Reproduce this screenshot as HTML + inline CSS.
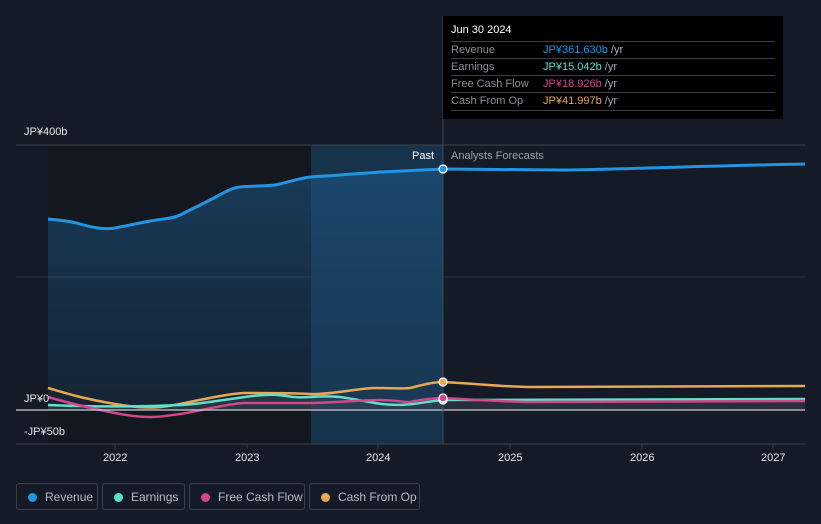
<!DOCTYPE html><html><head><style>
body{margin:0;background:#151b26;font-family:"Liberation Sans",sans-serif;}
.wrap{position:relative;width:821px;height:524px;overflow:hidden;background:#151b26}
.t{position:absolute;color:#e6e8eb;font-size:11px}
.tip{position:absolute;left:443px;top:16px;width:340px;height:103px;background:#000;}
.tip .h{position:absolute;left:8px;top:8px;color:#fff;font-size:11px}
.row{position:absolute;left:8px;width:324px;border-top:1px solid #3a3d42;height:17px;font-size:11px;color:#8a8f98;line-height:17px}
.row span{position:absolute;left:92px}
.row i{font-style:normal;color:#aab}
.leg{position:absolute;top:483px;height:27px;border:1px solid #3a404c;border-radius:3px;color:#b8bcc4;font-size:12px;line-height:27px;box-sizing:border-box}
.leg b{position:absolute;left:11px;top:9px;width:9px;height:9px;border-radius:50%}
.leg span{position:absolute;left:28px}
</style></head><body><div class="wrap">
<svg width="821" height="524" style="position:absolute;left:0;top:0">
<defs><linearGradient id="g" x1="0" y1="0" x2="0" y2="1"><stop offset="0" stop-color="#1d5a8a" stop-opacity=".55"/><stop offset="1" stop-color="#1d4a70" stop-opacity=".25"/></linearGradient></defs>
<rect x="48" y="145" width="263" height="299" fill="#121720"/>
<rect x="311" y="145" width="132" height="299" fill="#17324b"/>
<line x1="16" y1="145" x2="805" y2="145" stroke="#3a404c"/>
<line x1="16" y1="277" x2="805" y2="277" stroke="#2a303c"/>
<path d="M48,219 C60,220 70,221 80,224 S105,230 115,228 S140,223 150,221 S172,219 180,215 S200,205 210,200 S230,188 240,187 S268,186 275,185 S300,178 310,177 S330,176 340,175 S370,173 380,172 L443,169 L443,410 L48,410Z" fill="url(#g)"/>
<path d="M48,219 C60,220 70,221 80,224 S105,230 115,228 S140,223 150,221 S172,219 180,215 S200,205 210,200 S230,188 240,187 S268,186 275,185 S300,178 310,177 S330,176 340,175 S370,173 380,172 L443,169 C480,169 520,170 560,170 S700,166 805,164" fill="none" stroke="#2394e0" stroke-width="3"/>
<path d="M48,405 C80,406 100,407 150,406 S200,403 245,397 S280,399 310,397 S345,398 375,403 S420,402 443,400 L805,399 L805,410 L48,410Z" fill="#3a4450" opacity=".5"/>
<path d="M48,388 C65,393 80,398 115,404 S165,407 180,404 S230,393 245,393 S290,393 310,394 S360,388 375,388 S405,389 410,388 S430,382 443,382 C480,384 510,387 530,387 L805,386" fill="none" stroke="#e8a851" stroke-width="2.5"/>
<path d="M48,405 C80,406 100,407 150,406 S200,403 245,397 S280,399 310,397 S345,398 375,403 S420,402 443,400 L805,399" fill="none" stroke="#5fe0c8" stroke-width="2.5"/>
<path d="M48,397 C65,402 80,406 115,413 S165,416 180,414 S230,403 245,403 S290,403 310,403 S360,400 380,400 S405,403 410,402 S430,398 443,398 C480,400 510,402 530,402 L805,401" fill="none" stroke="#d0478a" stroke-width="2.5"/>
<line x1="16" y1="410" x2="805" y2="410" stroke="#c8ccd2" stroke-width="1.2"/>
<line x1="16" y1="444" x2="805" y2="444" stroke="#3a404c"/>
<g stroke="#3a404c"><line x1="115" y1="444" x2="115" y2="449"/><line x1="247" y1="444" x2="247" y2="449"/><line x1="378" y1="444" x2="378" y2="449"/><line x1="510" y1="444" x2="510" y2="449"/><line x1="642" y1="444" x2="642" y2="449"/><line x1="773" y1="444" x2="773" y2="449"/></g>
<line x1="443" y1="16" x2="443" y2="444" stroke="#3a4a5c"/>
<circle cx="443" cy="169" r="4" fill="#2394e0" stroke="#fff" stroke-width="1.2"/>
<circle cx="443" cy="382" r="4" fill="#e8a851" stroke="#fff" stroke-width="1.2"/>
<circle cx="443" cy="400" r="4" fill="#5fe0c8" stroke="#fff" stroke-width="1.2"/>
<circle cx="443" cy="398" r="4" fill="#d0478a" stroke="#fff" stroke-width="1.2"/>
</svg>
<div class="t" style="left:24px;top:126px">JP¥400b</div>
<div class="t" style="left:24px;top:393px">JP¥0</div>
<div class="t" style="left:24px;top:426px">-JP¥50b</div>
<div class="t" style="left:412px;top:150px;color:#fff">Past</div>
<div class="t" style="left:451px;top:150px;color:#9aa0a8">Analysts Forecasts</div>
<div class="t" style="left:103px;top:452px">2022</div>
<div class="t" style="left:235px;top:452px">2023</div>
<div class="t" style="left:366px;top:452px">2024</div>
<div class="t" style="left:498px;top:452px">2025</div>
<div class="t" style="left:630px;top:452px">2026</div>
<div class="t" style="left:761px;top:452px">2027</div>
<div class="tip"><div class="h">Jun 30 2024</div>
<div class="row" style="top:25px">Revenue<span style="color:#2394e0">JP¥361.630b <i>/yr</i></span></div>
<div class="row" style="top:42px">Earnings<span style="color:#5fe0c8">JP¥15.042b <i>/yr</i></span></div>
<div class="row" style="top:59px">Free Cash Flow<span style="color:#d0478a">JP¥18.926b <i>/yr</i></span></div>
<div class="row" style="top:76px;border-bottom:1px solid #3a3d42">Cash From Op<span style="color:#e8a851">JP¥41.997b <i>/yr</i></span></div>
</div>
<div class="leg" style="left:16px;width:82px"><b style="background:#2394e0"></b><span>Revenue</span></div>
<div class="leg" style="left:102px;width:83px"><b style="background:#5fe0c8"></b><span>Earnings</span></div>
<div class="leg" style="left:189px;width:116px"><b style="background:#d0478a"></b><span>Free Cash Flow</span></div>
<div class="leg" style="left:309px;width:111px"><b style="background:#e8a851"></b><span>Cash From Op</span></div>
</div></body></html>
